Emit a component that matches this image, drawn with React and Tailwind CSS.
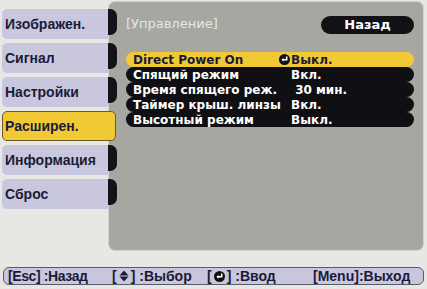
const tabs = [
  { label: "Изображен." },
  { label: "Сигнал" },
  { label: "Настройки" },
  { label: "Расширен.", active: true },
  { label: "Информация" },
  { label: "Сброс" },
];

const rows = [
  { label: "Direct Power On", value: "Выкл.", active: true },
  { label: "Спящий режим", value: "Вкл." },
  { label: "Время спящего реж.", value: " 30 мин." },
  { label: "Таймер крыш. линзы", value: "Вкл." },
  { label: "Высотный режим", value: "Выкл." },
];

function EnterIcon({ size = 11 }) {
  return (
    <svg width={size} height={size} viewBox="0 0 10 10" className="shrink-0">
      <circle cx="5" cy="5" r="5" fill="#111" />
      <path d="M7 2.3v3H3.4" stroke="#fff" strokeWidth="1.4" fill="none" />
      <path d="M2.2 5.3l2-1.7v3.4z" fill="#fff" />
    </svg>
  );
}

function UpDownIcon() {
  return (
    <svg width="10" height="12" viewBox="0 0 10 12" className="shrink-0">
      <path d="M5 0.5L9.5 5.6H0.5z" fill="#1c1c3a" />
      <path d="M5 11.5L9.5 6.4H0.5z" fill="#1c1c3a" />
    </svg>
  );
}

const sans = { fontFamily: '"Liberation Sans", Arial, sans-serif' };

export default function App() {
  return (
    <div
      className="w-[427px] h-[289px] bg-[#e7e7e4] overflow-hidden flex flex-col"
      style={{ fontFamily: '"DejaVu Sans", sans-serif' }}
    >
      <div className="flex pt-[1px]">
        <div className="w-[117px] pt-[8px] pl-[2px] flex flex-col gap-[4px] relative z-10" style={sans}>
          {tabs.map(t => (
            <div key={t.label} className="flex h-[30px]">
              {t.active ? (
                <div className="w-[114px] h-[30px] bg-[#f1c935] rounded-[5px] border border-[#6b5a20] flex items-center pl-[2px] text-[14px] font-bold text-[#1b1b38]">
                  {t.label}
                </div>
              ) : (
                <>
                  <div className="w-[106px] h-[30px] bg-[#c9c7de] rounded-l-[5px] flex items-center pl-[3px] text-[14px] font-bold text-[#1b1b38]">
                    {t.label}
                  </div>
                  <div className="w-[9px] h-[26px] bg-[#121218] rounded-r-[7px]" />
                </>
              )}
            </div>
          ))}
        </div>

        <div className="-ml-[9px] w-[316px] h-[250px] bg-[#a6a7a1] rounded-[7px] border border-[#d9cfd3] pl-[17px] pr-[9px] pt-[14px]">
          <div className="flex items-center justify-between">
            <span className="text-[13px] text-[#e6e6e6] -mt-[2px]">[Управление]</span>
            <div className="w-[93px] h-[18px] bg-[#121216] rounded-full flex items-center justify-center text-[13px] font-bold text-white">
              Назад
            </div>
          </div>

          <div className="mt-[18px] flex flex-col">
            {rows.map(r => (
              <div
                key={r.label}
                className={
                  "h-[15px] w-[288px] rounded-full flex items-center pl-[7px] text-[12px] font-bold whitespace-pre " +
                  (r.active ? "bg-[#f1c935] text-[#1b1b38]" : "bg-[#101014] text-white")
                }
              >
                <span className="w-[146px]">{r.label}</span>
                <span className="w-[12px] flex items-center">{r.active && <EnterIcon />}</span>
                <span>{r.value}</span>
              </div>
            ))}
          </div>
        </div>
      </div>

      <div
        className="mt-[16px] mx-[3px] h-[18px] rounded-[6px] bg-[#c9c7de] border border-[#5a5a6a] flex items-center text-[14px] font-bold text-[#1b1b38] whitespace-pre"
        style={sans}
      >
        <span className="pl-[4px] w-[108px] tracking-[-0.4px]">[Esc] :Назад</span>
        <span className="w-[95px] flex items-center">[<span className="mx-[2px] flex"><UpDownIcon /></span>] :Выбор</span>
        <span className="w-[106px] flex items-center">[<span className="mx-[2px] flex"><EnterIcon size={11} /></span>] :Ввод</span>
        <span>[Menu]:Выход</span>
      </div>
    </div>
  );
}
